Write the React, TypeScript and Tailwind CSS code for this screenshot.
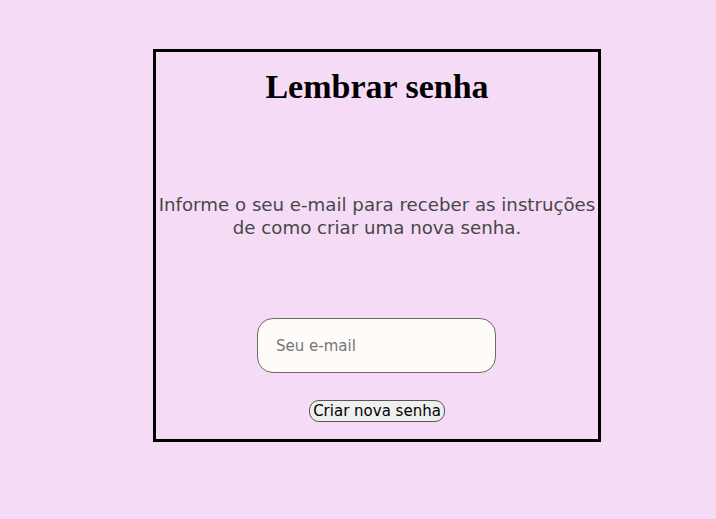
import React from 'react';

const App: React.FC = () => {
  return (
    <div className="min-h-screen w-full bg-[#f6dbf7] pt-[49px] pl-[153px]">
      <div className="w-[448px] h-[393px] border-[3px] border-black flex flex-col items-center">
        <h1 className="mt-[15px] text-[34px] leading-[40px] font-bold text-black font-['Liberation_Serif',serif]">
          Lembrar senha
        </h1>
        <p className="mt-[86px] w-full text-center text-[18.2px] leading-[23px] text-[#474747] font-['DejaVu_Sans',sans-serif]">
          Informe o seu e-mail para receber as instruções de como criar uma nova senha.
        </p>
        <input
          type="email"
          placeholder="Seu e-mail"
          className="mt-[79px] mr-[1px] w-[239px] h-[55px] rounded-[16px] border border-[#6b6b6b] bg-[#fffbf8] px-[18px] text-[15px] font-['DejaVu_Sans',sans-serif] placeholder:text-[#757575] outline-none"
        />
        <button className="mt-[27px] h-[22px] px-[3px] rounded-[10px] border border-[#555] bg-[#efefef] text-[15px] leading-[18px] text-black font-['DejaVu_Sans',sans-serif]">
          Criar nova senha
        </button>
      </div>
    </div>
  );
};

export default App;
